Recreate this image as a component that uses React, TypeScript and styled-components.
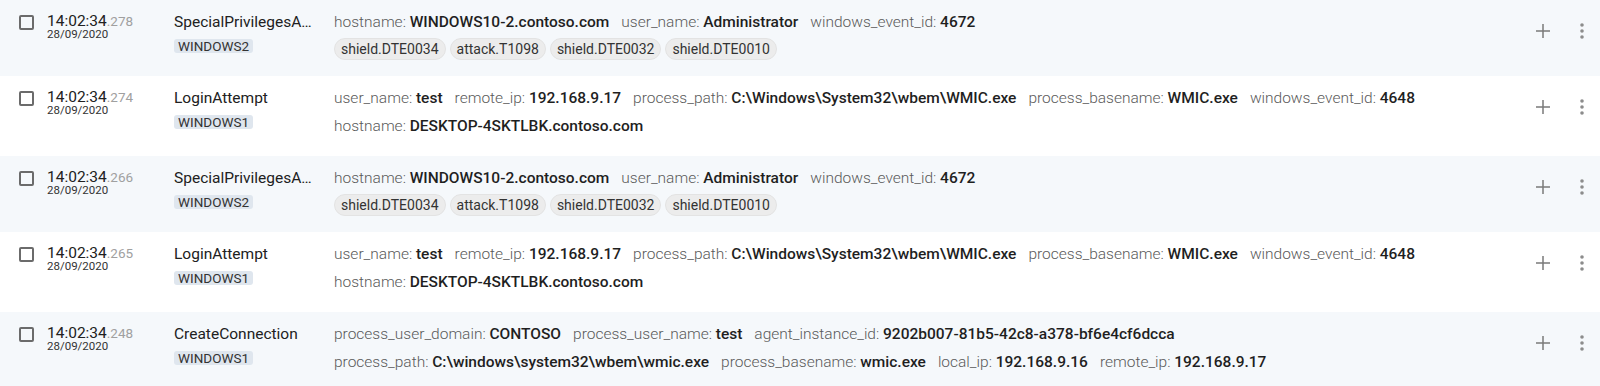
import * as React from 'react'
import styled, { createGlobalStyle } from 'styled-components'

const GlobalStyle = createGlobalStyle`
  body {
    margin: 0;
    background: #ffffff;
    font-family: Roboto, "Liberation Sans", Arial, sans-serif;
    color: #212121;
  }
`

const List = styled.div`
  display: flex;
  flex-direction: column;
`

const Row = styled.div<{ $shaded: boolean }>`
  display: flex;
  align-items: flex-start;
  padding: 8px 6px 16px 19px;
  background: ${p => (p.$shaded ? '#f5f8fb' : '#ffffff')};
`

const CheckBox = styled.span`
  box-sizing: border-box;
  flex: none;
  width: 15px;
  height: 15px;
  margin-top: 7px;
  margin-right: 13px;
  border: 2px solid #6b6b6b;
  border-radius: 2px;
`

const TimeCol = styled.div`
  flex: none;
  width: 127px;
  margin-top: 6px;
`

const Time = styled.div`
  font-size: 15.5px;
  line-height: 15px;
  color: #212121;
`

const Millis = styled.span`
  font-size: 13.5px;
  color: #a0a0a0;
`

const DateText = styled.div`
  font-size: 11.5px;
  line-height: 11px;
  color: #333;
`

const TypeCol = styled.div`
  flex: none;
  width: 160px;
  margin-top: 5px;
`

const TypeName = styled.div`
  width: 141px;
  font-size: 15.5px;
  line-height: 18px;
  white-space: nowrap;
  overflow: hidden;
  text-overflow: ellipsis;
`

const Badge = styled.span`
  display: inline-block;
  margin-top: 8px;
  padding: 0 4px;
  font-size: 13.5px;
  line-height: 14px;
  color: #333;
  background: #dfe6ee;
  border-radius: 3px;
`

const Details = styled.div`
  flex: 1;
  min-width: 0;
`

const Line = styled.div`
  font-size: 15.5px;
  line-height: 28px;
  white-space: nowrap;
`

const Field = styled.span`
  margin-right: 12px;
`

const Key = styled.span`
  font-weight: 300;
  color: #5a5a5a;
`

const Value = styled.span`
  font-weight: 500;
  color: #1f1f1f;
`

const Tags = styled.div`
  display: flex;
  gap: 4px;
  margin-top: 2px;
`

const Tag = styled.span`
  box-sizing: border-box;
  height: 22px;
  padding: 0 6px;
  font-size: 14px;
  line-height: 20px;
  color: #333;
  background: #ececec;
  border: 1px solid #e3e3e3;
  border-radius: 11px;
`

const Actions = styled.div`
  display: flex;
  align-items: center;
  gap: 15px;
  margin-top: 11px;
  height: 24px;
`

const IconButton = styled.button`
  display: flex;
  align-items: center;
  justify-content: center;
  width: 24px;
  height: 24px;
  padding: 0;
  border: none;
  background: none;
  color: #7a7a7a;
`

const PlusIcon = () => (
  <svg width="16" height="16" viewBox="0 0 16 16">
    <path d="M8 1v14M1 8h14" stroke="currentColor" strokeWidth="1.5" fill="none" />
  </svg>
)

const DotsIcon = () => (
  <svg width="6" height="18" viewBox="0 0 6 18">
    <circle cx="3" cy="3" r="1.8" fill="#8c8c8c" />
    <circle cx="3" cy="9" r="1.8" fill="#8c8c8c" />
    <circle cx="3" cy="15" r="1.8" fill="#8c8c8c" />
  </svg>
)

interface EventRecord {
  ms: string
  type: string
  source: string
  lines: [string, string][][]
  tags?: string[]
}

const privileges = (ms: string): EventRecord => ({
  ms,
  type: 'SpecialPrivilegesAssigned',
  source: 'WINDOWS2',
  lines: [[
    ['hostname', 'WINDOWS10-2.contoso.com'],
    ['user_name', 'Administrator'],
    ['windows_event_id', '4672'],
  ]],
  tags: ['shield.DTE0034', 'attack.T1098', 'shield.DTE0032', 'shield.DTE0010'],
})

const login = (ms: string): EventRecord => ({
  ms,
  type: 'LoginAttempt',
  source: 'WINDOWS1',
  lines: [
    [
      ['user_name', 'test'],
      ['remote_ip', '192.168.9.17'],
      ['process_path', 'C:\\Windows\\System32\\wbem\\WMIC.exe'],
      ['process_basename', 'WMIC.exe'],
      ['windows_event_id', '4648'],
    ],
    [['hostname', 'DESKTOP-4SKTLBK.contoso.com']],
  ],
})

const events: EventRecord[] = [
  privileges('278'),
  login('274'),
  privileges('266'),
  login('265'),
  {
    ms: '248',
    type: 'CreateConnection',
    source: 'WINDOWS1',
    lines: [
      [
        ['process_user_domain', 'CONTOSO'],
        ['process_user_name', 'test'],
        ['agent_instance_id', '9202b007-81b5-42c8-a378-bf6e4cf6dcca'],
      ],
      [
        ['process_path', 'C:\\windows\\system32\\wbem\\wmic.exe'],
        ['process_basename', 'wmic.exe'],
        ['local_ip', '192.168.9.16'],
        ['remote_ip', '192.168.9.17'],
      ],
    ],
  },
]

export default function App() {
  return (
    <>
      <GlobalStyle />
      <List>
        {events.map((ev, i) => (
          <Row key={i} $shaded={i % 2 === 0}>
            <CheckBox />
            <TimeCol>
              <Time>
                14:02:34<Millis>.{ev.ms}</Millis>
              </Time>
              <DateText>28/09/2020</DateText>
            </TimeCol>
            <TypeCol>
              <TypeName>{ev.type}</TypeName>
              <Badge>{ev.source}</Badge>
            </TypeCol>
            <Details>
              {ev.lines.map((line, j) => (
                <Line key={j}>
                  {line.map(([k, v]) => (
                    <Field key={k}>
                      <Key>{k}: </Key>
                      <Value>{v}</Value>
                    </Field>
                  ))}
                </Line>
              ))}
              {ev.tags && (
                <Tags>
                  {ev.tags.map(t => <Tag key={t}>{t}</Tag>)}
                </Tags>
              )}
            </Details>
            <Actions>
              <IconButton><PlusIcon /></IconButton>
              <IconButton><DotsIcon /></IconButton>
            </Actions>
          </Row>
        ))}
      </List>
    </>
  )
}
